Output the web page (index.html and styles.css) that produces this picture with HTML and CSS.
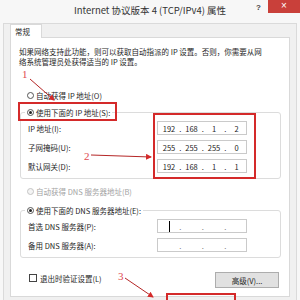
FILE: index.html
```html
<!DOCTYPE html>
<html lang="zh-CN">
<head>
  <meta charset="UTF-8">
  <meta name="viewport" content="width=device-width, initial-scale=1.0">
  <title>Internet 协议版本 4 (TCP/IPv4) 属性</title>
  <link rel="stylesheet" href="styles.css">
</head>
<body>

<div class="window">
  <div class="titlebar">
    <span></span>
    <span class="title">Internet 协议版本 4 (TCP/IPv4) 属性</span>
    <div class="controls">
      <span class="help">?</span>
      <span class="close">×</span>
    </div>
  </div>

  <div class="client">
    <div class="tabs"><div class="tab">常规</div></div>

    <div class="panel">
      <p class="intro">如果网络支持此功能，则可以获取自动指派的 IP 设置。否则，你需要从网<br>络系统管理员处获得适当的 IP 设置。</p>

      <div class="opt first"><span class="radio"></span>自动获得 IP 地址(O)</div>

      <fieldset class="group">
        <legend class="opt"><span class="radio on"></span>使用下面的 IP 地址(S):</legend>
        <div class="rows">
          <div class="row">
            <label>IP 地址(I):</label>
            <div class="ip"><span>192</span><i>.</i><span>168</span><i>.</i><span>1</span><i>.</i><span>2</span></div>
          </div>
          <div class="row">
            <label>子网掩码(U):</label>
            <div class="ip"><span>255</span><i>.</i><span>255</span><i>.</i><span>255</span><i>.</i><span>0</span></div>
          </div>
          <div class="row">
            <label>默认网关(D):</label>
            <div class="ip"><span>192</span><i>.</i><span>168</span><i>.</i><span>1</span><i>.</i><span>1</span></div>
          </div>
        </div>
      </fieldset>

      <div class="opt disabled"><span class="radio"></span>自动获得 DNS 服务器地址(B)</div>

      <fieldset class="group">
        <legend class="opt"><span class="radio on"></span>使用下面的 DNS 服务器地址(E):</legend>
        <div class="rows">
          <div class="row">
            <label>首选 DNS 服务器(P):</label>
            <div class="ip empty"><span><b class="caret"></b></span><i>.</i><span></span><i>.</i><span></span><i>.</i><span></span></div>
          </div>
          <div class="row">
            <label>备用 DNS 服务器(A):</label>
            <div class="ip empty"><span></span><i>.</i><span></span><i>.</i><span></span><i>.</i><span></span></div>
          </div>
        </div>
      </fieldset>

      <div class="footer">
        <label class="check"><span class="checkbox"></span>退出时验证设置(L)</label>
        <button class="btn">高级(V)...</button>
      </div>
    </div>
  </div>
</div>

<!-- red annotations drawn over the screenshot -->
<svg class="marks" width="300" height="300" viewBox="0 0 300 300">
  <defs>
    <marker id="arrow" markerWidth="6" markerHeight="6" refX="5" refY="3" orient="auto">
      <path d="M0,0 L6,3 L0,6 Z" fill="#d42a2a"/>
    </marker>
  </defs>
  <rect x="19" y="103" width="97" height="17" class="frame"/>
  <rect x="154" y="114" width="101" height="64" class="frame"/>
  <rect x="167" y="294" width="68" height="10" class="frame"/>
  <line x1="30" y1="79" x2="54" y2="100" class="pointer" marker-end="url(#arrow)"/>
  <line x1="91" y1="155" x2="151" y2="157" class="pointer" marker-end="url(#arrow)"/>
  <line x1="125" y1="278" x2="153" y2="297" class="pointer" marker-end="url(#arrow)"/>
  <text x="22" y="78" class="num">1</text>
  <text x="84" y="160" class="num">2</text>
  <text x="118" y="280" class="num">3</text>
</svg>

</body>
</html>
```

FILE: styles.css
```css
body {
  margin: 0;
  width: 300px;
  height: 300px;
  overflow: hidden;
  position: relative;
  background: #f7f7f7;
  color: #1e1e1e;
  font-family: "Noto Sans CJK SC", sans-serif;
  font-size: 7.5px;
}
.window {
  height: 300px;
  display: flex;
  flex-direction: column;
}
.titlebar {
  height: 23px;
  flex: none;
  display: grid;
  grid-template-columns: 1fr auto 1fr;
  align-items: start;
}
.title {
  font-size: 9.5px;
  line-height: 20px;
  color: #333;
  white-space: nowrap;
}
.controls {
  display: flex;
  justify-content: flex-end;
  align-items: flex-start;
}
.help {
  font-family: "Liberation Sans", sans-serif;
  font-weight: bold;
  font-size: 8px;
  line-height: 15px;
  color: #444;
  margin-right: 7px;
}
.close {
  width: 32px;
  height: 13px;
  background: #c9403a;
  color: #fff;
  font-family: "Liberation Sans", sans-serif;
  font-size: 10px;
  line-height: 12px;
  text-align: center;
}
.client {
  flex: 1;
  display: flex;
  flex-direction: column;
  margin: 0 3px;
  padding: 0 6px;
  border: 1px solid #dadada;
  border-bottom: none;
  background: #f0f0f0;
}
.tabs {
  height: 13px;
  flex: none;
  display: flex;
  align-items: flex-end;
}
.tab {
  position: relative;
  z-index: 1;
  box-sizing: border-box;
  width: 32px;
  height: 14px;
  margin-bottom: -1px;
  padding-left: 4px;
  background: #fff;
  border: 1px solid #d9d9d9;
  border-bottom: none;
  line-height: 13px;
}
.panel {
  flex: 1;
  margin-bottom: 3px;
  padding: 9px 8px 0 8px;
  background: #fff;
  border: 1px solid #d9d9d9;
}
.intro {
  margin: 0;
  line-height: 10px;
  white-space: nowrap;
}
.opt {
  display: flex;
  align-items: center;
  gap: 2px;
  height: 12px;
  white-space: nowrap;
}
.first {
  margin-top: 23px;
  height: 11px;
  padding-left: 8px;
}
.radio {
  box-sizing: border-box;
  width: 7px;
  height: 7px;
  border-radius: 50%;
  border: 1px solid #555;
  background: #fff;
  display: flex;
  align-items: center;
  justify-content: center;
}
.radio.on::after {
  content: "";
  width: 3px;
  height: 3px;
  border-radius: 50%;
  background: #222;
}
.disabled {
  margin-top: 7px;
  height: 11px;
  padding-left: 8px;
  color: #a3a3a3;
}
.disabled .radio {
  border-color: #c4c4c4;
  background: #f4f4f4;
}
.group {
  margin: 5px 0 0 1px;
  padding: 0 7px 5px 7px;
  border: 1px solid #dcdcdc;
  border-radius: 3px;
}
.group legend {
  margin-left: -3px;
  padding: 0 2px;
}
.rows {
  display: grid;
  gap: 5px;
  padding-top: 3px;
}
.row {
  display: flex;
  align-items: center;
  height: 14px;
}
.row label {
  flex: 0 0 129px;
}
.ip {
  box-sizing: border-box;
  width: 90px;
  height: 14px;
  padding-left: 3px;
  border: 1px solid #cacaca;
  display: flex;
  align-items: center;
  color: #222;
}
.ip span {
  width: 16px;
  text-align: center;
}
.ip i {
  width: 6.5px;
  font-style: normal;
  text-align: center;
}
.ip.empty i {
  color: #777;
}
.caret {
  display: inline-block;
  width: 1px;
  height: 11px;
  background: #000;
  vertical-align: middle;
}
.group + .group,
.disabled + .group {
  margin-top: 7px;
}
.footer {
  margin-top: 14px;
  padding-left: 10px;
  display: flex;
  justify-content: space-between;
  align-items: center;
}
.check {
  display: flex;
  align-items: center;
  gap: 3px;
  margin-top: -4px;
}
.checkbox {
  box-sizing: border-box;
  width: 8px;
  height: 8px;
  border: 1px solid #444;
  background: #fff;
}
.btn {
  box-sizing: border-box;
  width: 64px;
  height: 16px;
  margin-right: 2px;
  padding: 0;
  background: #e1e1e1;
  border: 1px solid #adadad;
  border-radius: 0;
  font-family: inherit;
  font-size: 7.5px;
  color: #1e1e1e;
}
.marks {
  position: absolute;
  top: 0;
  left: 0;
  pointer-events: none;
}
.marks .frame {
  fill: none;
  stroke: #d42a2a;
  stroke-width: 2;
}
.marks .pointer {
  stroke: #b52626;
  stroke-width: 1;
}
.marks .num {
  font-family: "Liberation Serif", serif;
  font-size: 11px;
  fill: #e04a4f;
}
```
